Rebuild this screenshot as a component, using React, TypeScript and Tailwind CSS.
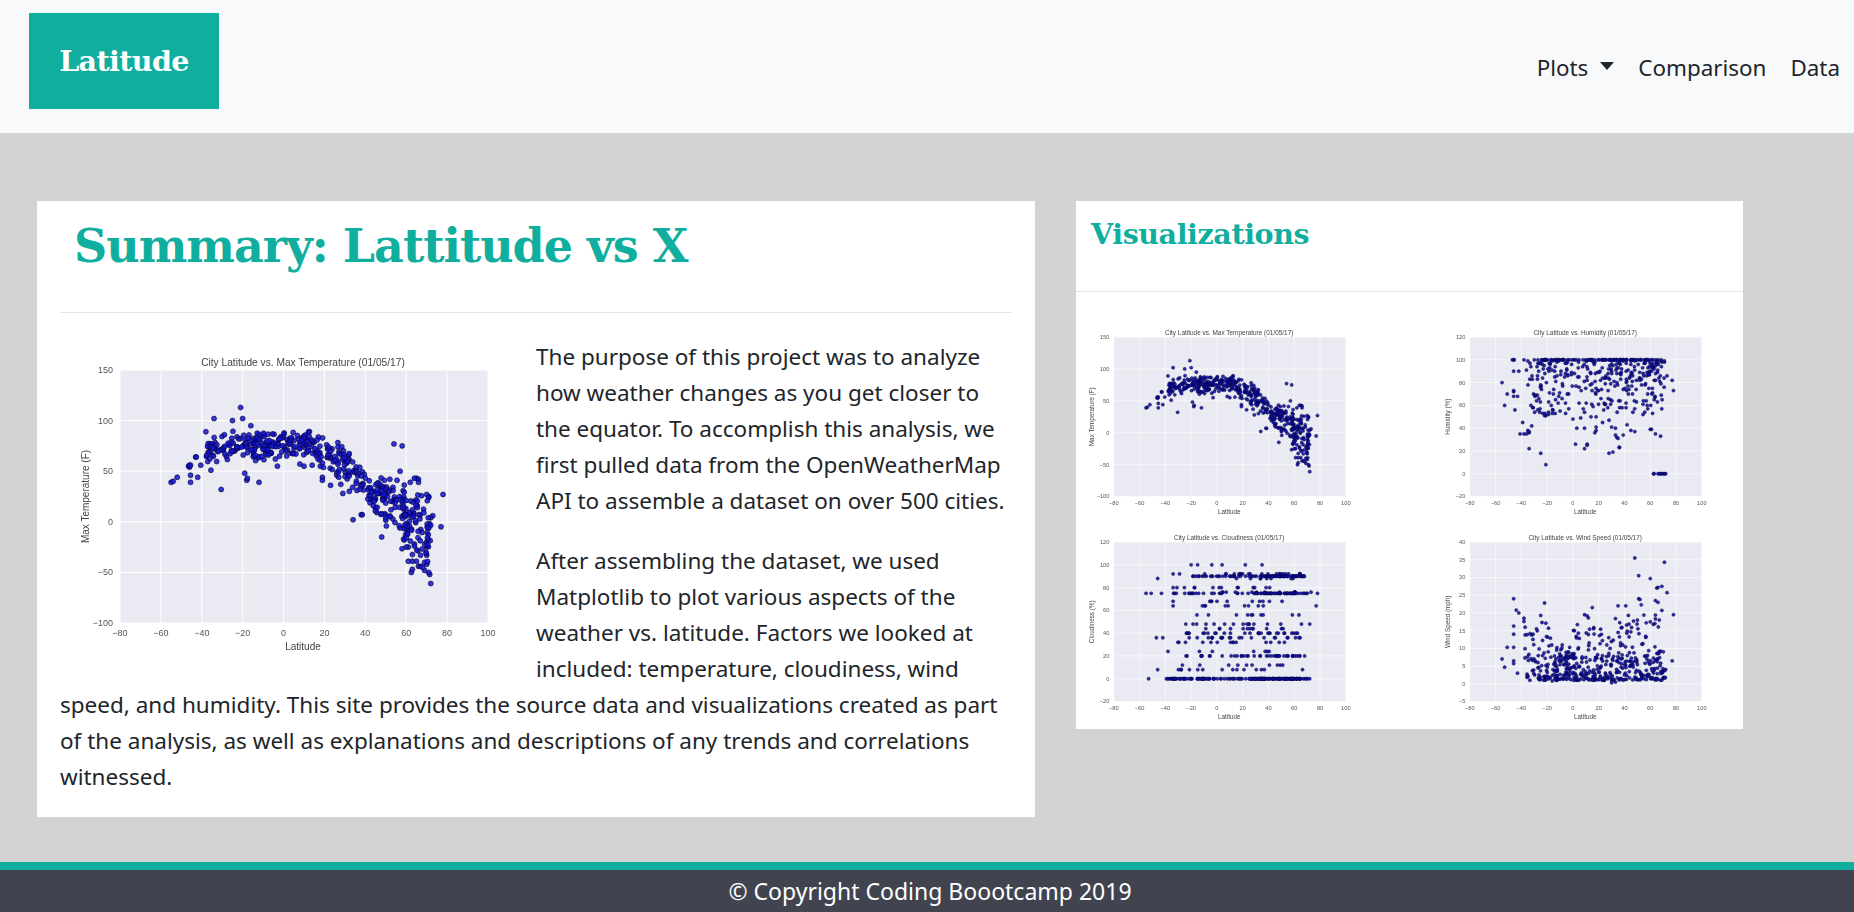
import React from "react";

type P = [number, number];

function rng(seed: number) {
  let s = seed;
  return () => {
    s = (s * 1664525 + 1013904223) % 4294967296;
    return s / 4294967296;
  };
}
const gauss = (r: () => number) => (r() + r() + r() + r() - 2) * 0.87;

function latSample(r: () => number) {
  const u = r();
  if (u < 0.26) return -38 + r() * 36;
  if (u < 0.46) return -2 + r() * 24;
  if (u < 0.84) return 22 + r() * 38;
  return 58 + r() * 14;
}

const tempAnchors: P[] = [[-60, 40], [-45, 56], [-35, 68], [-25, 74], [-10, 76], [0, 78], [10, 76], [20, 70], [28, 60], [35, 46], [42, 32], [50, 25], [58, 10], [65, 2], [72, -12], [80, -30]];
function curve(lat: number) {
  for (let i = 0; i < tempAnchors.length - 1; i++) {
    const [a, b] = tempAnchors[i];
    const [c, d] = tempAnchors[i + 1];
    if (lat >= a && lat <= c) return b + ((lat - a) / (c - a)) * (d - b);
  }
  return 0;
}

const tempData: P[] = (() => {
  const r = rng(17);
  const out: P[] = [[-55, 39], [-54, 40], [-52, 44], [-46.5, 55], [-46, 54], [-46, 56], [-45.5, 56], [-45.5, 46], [-45.5, 39], [-42, 44], [-43, 64], [-42.7, 64], [-40.5, 56], [-38, 89], [-34, 102], [-25, 100], [-21, 113], [-20, 102], [-30.5, 32], [-19, 48], [-18, 41], [-17.7, 43], [-12, 39], [-16, 95], [54, 77], [58, 75], [57, 50], [52, 42], [34, 2], [38, 7], [38.5, 7], [48, -15], [77, -5], [78, 27], [73, 6], [72, 4], [72, -61], [71.5, -52], [71, -50], [70, -42], [69, -40], [70, -33], [67, -33], [70, -25], [69, -22], [70, -20], [66, -44], [65, -39], [63, -39], [61, -39], [62.5, -50], [63, -47], [67, -44], [69, -48], [68, -45], [59, -18], [61, -25], [60, -25], [64, -22], [64, -24], [62, -19], [65, 43], [66, 42], [64, 43], [66, 39], [62, 39], [71, 25], [70, 27], [71, 24], [-3, 55], [-4, 62], [8, 57], [10, 55], [14, 56], [18, 55], [19, 44], [19, 41], [23, 36], [29, 28], [26, 46], [27, 44], [28, 37]];
  for (let i = 0; i < 470; i++) {
    const lat = latSample(r);
    const spread = lat > 50 ? 30 : lat > 25 ? 19 : 14;
    let v = curve(lat) + gauss(r) * spread;
    if (lat < 22 && v > 90) v = 90 - r() * 10;
    out.push([lat, v]);
  }
  return out;
})();

const humidityData: P[] = (() => {
  const r = rng(91);
  const out: P[] = [[-55, 80], [-53, 60], [-51, 70], [-46, 68], [-46, 72], [-46, 73], [-46, 90], [-45, 56], [-43, 68], [-42, 90], [-41, 35], [-39, 45], [-38, 35], [-36, 35], [-35, 38], [-34, 36], [-34, 37], [-34, 22], [-32, 42], [-25, 18], [-21, 8], [-21, 51], [-22, 51], [-16, 53], [-10, 55], [0, 48], [3, 40], [6, 49], [9, 40], [9, 54], [2, 26], [9, 22], [11, 26], [11, 25], [14, 50], [18, 50], [17, 36], [18, 38], [18, 41], [23, 45], [28, 18], [31, 19], [28, 47], [30, 41], [33, 40], [36, 23], [36, 23.3], [33, 34], [35, 31], [34, 32], [39, 34], [42, 43], [45, 38], [48, 37], [58, 57], [60, 39], [61, 39], [64, 35], [68, 33], [62.5, 0], [63, 0], [66, 0], [67, 0], [68, 0], [69, 0], [70, 0], [71, 0], [72, 0], [-47, 100], [-46, 100], [-45.5, 100], [-38, 100], [-35, 99], [-30, 100], [77, 82], [78, 73], [73, 86]];
  for (let i = 0; i < 85; i++) out.push([-25 + r() * 96, 100]);
  for (let i = 0; i < 310; i++) {
    const lat = -37 + Math.pow(r(), 0.85) * 108;
    const v = 100 - Math.pow(r(), 1.4) * 48;
    out.push([lat, Math.round(v)]);
  }
  return out;
})();

const cloudData: P[] = (() => {
  const r = rng(43);
  const out: P[] = [[-55, 75], [-51, 75], [-53, 0], [-46, 88], [-46, 8], [-47, 36], [-43, 75], [-42, 36], [-38, 24], [-20, 100], [-15, 100], [-4, 100], [4, 100], [22, 100], [35, 100], [77, 64], [78, 75], [73, 76], [72, 48], [-34, 92], [-29, 92], [-34, 68], [-34, 64], [-34, 80], [-31, 80]];
  const rows: [number, number, number, number][] = [
    [0, 110, -40, 72], [8, 14, -35, 72], [12, 10, -31, 65], [20, 40, -27, 70], [24, 6, -26, 62], [32, 14, -31, 60], [36, 22, -25, 66], [40, 28, -26, 66], [44, 12, -9, 68], [48, 15, -28, 72], [56, 10, -26, 68], [64, 9, -20, 68], [68, 10, -34, 62], [75, 40, -35, 72], [76, 12, -15, 70], [80, 12, -34, 71], [88, 8, -5, 60], [90, 30, -22, 33], [90, 60, 33, 68], [92, 22, -22, 66],
  ];
  rows.forEach(([y, n, a, b]) => {
    for (let i = 0; i < n; i++) out.push([a + r() * (b - a), y]);
  });
  for (let i = 0; i < 50; i++) out.push([25 + r() * 40, 0]);
  for (let i = 0; i < 30; i++) out.push([30 + r() * 38, 75]);
  return out;
})();

const windData: P[] = (() => {
  const r = rng(7);
  const out: P[] = [[48, 35.5], [71, 34.3], [51, 30.5], [60, 29.7], [69, 27.5], [65, 27], [66, 27.2], [73, 25.7], [-46, 24], [-22, 22.8], [-44, 20.8], [-42, 20], [15, 21.5], [35, 22], [41, 22], [53, 22.3], [51, 24], [52, 23.8], [64, 23.5], [66, 23], [69, 20.7], [78, 19.5], [-55, 7], [-53, 4.7], [-51, 10.3], [77, 6.5], [-46, 16.3], [-46, 14], [-46, 10.3], [-46, 6.5], [-46, 5.7], [-43, 3], [-38, 18.5], [-38, 17.6], [-25, 19.3], [-24, 17.3], [-21, 17.1], [9, 19.5], [11, 19.2], [12, 18.6], [33, 18.4], [43, 19.3], [47, 17.7], [50, 18], [55, 19.4], [64, 19.4], [64, 18.3], [67, 18], [30, 0.3], [33, 0.5], [-16, 0.8]];
  for (let i = 0; i < 340; i++) {
    const lat = i % 6 === 0 ? -36 + r() * 24 : -15 + r() * 87;
    out.push([lat, 1 + Math.pow(r(), 1.6) * 7]);
  }
  for (let i = 0; i < 125; i++) {
    const lat = -38 + r() * 110;
    const top = lat > 28 ? 18 : lat > 0 ? 17 : lat > -15 ? 11 : 16;
    out.push([lat, 7 + r() * (top - 7)]);
  }
  return out;
})();

const xTicks = [-80, -60, -40, -20, 0, 20, 40, 60, 80, 100];
const fmt = (n: number) => (n < 0 ? "\u2212" + Math.abs(n) : String(n));

function Plot({ title, ylabel, ymin, ymax, step, data, small }: { title: string; ylabel: string; ymin: number; ymax: number; step: number; data: P[]; small?: boolean }) {
  const L = 60, R = 428, T = 30, B = 283;
  const sx = (v: number) => L + ((v + 80) / 180) * (R - L);
  const sy = (v: number) => B - ((v - ymin) / (ymax - ymin)) * (B - T);
  const yTicks: number[] = [];
  for (let v = ymin; v <= ymax; v += step) yTicks.push(v);
  return (
    <svg
      viewBox="0 0 460 320"
      className={small ? "block w-[290px] h-[202px] blur-[0.4px]" : "float-left w-[460px] h-[320px] mt-[1px] mr-4 mb-2 blur-[0.4px]"}
      fontFamily="'Liberation Sans', sans-serif"
    >
      <rect x={L} y={T} width={R - L} height={B - T} fill="#eaeaf2" />
      {xTicks.map((t) => (
        <line key={t} x1={sx(t)} x2={sx(t)} y1={T} y2={B} stroke="#ffffff" strokeWidth={1} />
      ))}
      {yTicks.map((t) => (
        <line key={t} x1={L} x2={R} y1={sy(t)} y2={sy(t)} stroke="#ffffff" strokeWidth={1} />
      ))}
      {data.map(([x, y], i) => (
        <circle key={i} cx={sx(x)} cy={sy(y)} r={small ? 2.6 : 2.5} fill={small ? "#0a0a9e" : "#1414d2"} fillOpacity={0.85} stroke="#000033" strokeWidth={0.6} />
      ))}
      <g fontSize={9} fill="#555555">
        {xTicks.map((t) => (
          <text key={t} x={sx(t)} y={296} textAnchor="middle">{fmt(t)}</text>
        ))}
        {yTicks.map((t) => (
          <text key={t} x={53} y={sy(t) + 3} textAnchor="end">{fmt(t)}</text>
        ))}
      </g>
      <text x={243} y={26} textAnchor="middle" fontSize={10.2} fill="#444444">{title}</text>
      <text x={243} y={310} textAnchor="middle" fontSize={10} fill="#444444">Latitude</text>
      <text transform={`translate(29 ${(T + B) / 2}) rotate(-90)`} textAnchor="middle" fontSize={10} fill="#444444">{ylabel}</text>
    </svg>
  );
}

export default function App() {
  return (
    <div className="min-h-screen h-[912px] flex flex-col bg-[#d3d3d3] font-['Noto_Sans',sans-serif] text-[#212529] overflow-hidden">
      <nav className="h-[133px] shrink-0 bg-[#f8f9fa] flex justify-between pl-[29px] pr-[14px]">
        <a className="mt-[13px] w-[190px] h-[96px] bg-[#0fae9e] flex items-center justify-center text-white font-bold font-['DejaVu_Serif',serif] text-[28.5px] tracking-[-0.6px]">Latitude</a>
        <ul className="flex items-start gap-[24px] pt-[50px] text-[22.4px] leading-[36px]">
          <li className="flex items-center gap-[12px]">
            Plots
            <span className="w-0 h-0 border-x-[7px] border-x-transparent border-t-[8px] border-t-[#212529] -mt-[4px]" />
          </li>
          <li>Comparison</li>
          <li>Data</li>
        </ul>
      </nav>

      <main className="flex-1 flex items-start pt-[68px] pl-[37px] gap-[41px]">
        <section className="w-[998px] h-[616px] bg-white px-[23px]">
          <h1 className="h-[112px] pl-[14px] pt-[10px] border-b border-b-[#e3e3e3] text-[#0fae9e] font-bold font-['DejaVu_Serif',serif] text-[46px] leading-[70px] tracking-[-1px]">Summary: Lattitude vs X</h1>
          <div className="pt-[26px] text-[22.5px] leading-[36px]">
            <Plot small={false} title="City Latitude vs. Max Temperature (01/05/17)" ylabel="Max Temperature (F)" ymin={-100} ymax={150} step={50} data={tempData} />
            <p className="mb-[24px]">The purpose of this project was to analyze how weather changes as you get closer to the equator. To accomplish this analysis, we first pulled data from the OpenWeatherMap API to assemble a dataset on over 500 cities.</p>
            <p>After assembling the dataset, we used Matplotlib to plot various aspects of the weather vs. latitude. Factors we looked at included: temperature, cloudiness, wind speed, and humidity. This site provides the source data and visualizations created as part of the analysis, as well as explanations and descriptions of any trends and correlations witnessed.</p>
          </div>
        </section>

        <section className="w-[667px] h-[528px] bg-white">
          <h2 className="h-[91px] pl-[15px] pt-[13px] border-b border-b-[#e3e3e3] text-[#0fae9e] font-bold font-['DejaVu_Serif',serif] text-[28.5px] leading-[40px] tracking-[-0.4px]">Visualizations</h2>
          <div className="pt-[26px] grid grid-cols-[356px_311px] auto-rows-[205px]">
            <Plot small title="City Latitude vs. Max Temperature (01/05/17)" ylabel="Max Temperature (F)" ymin={-100} ymax={150} step={50} data={tempData} />
            <Plot small title="City Latitude vs. Humidity (01/05/17)" ylabel="Humidity (%)" ymin={-20} ymax={120} step={20} data={humidityData} />
            <Plot small title="City Latitude vs. Cloudiness (01/05/17)" ylabel="Cloudiness (%)" ymin={-20} ymax={120} step={20} data={cloudData} />
            <Plot small title="City Latitude vs. Wind Speed (01/05/17)" ylabel="Wind Speed (mph)" ymin={-5} ymax={40} step={5} data={windData} />
          </div>
        </section>
      </main>

      <footer className="h-[50px] shrink-0 border-t-[8px] border-t-[#0fae9e] bg-[#41444f] text-white text-center text-[23px] leading-[42px] pl-[6px]">© Copyright Coding Boootcamp 2019</footer>
    </div>
  );
}
